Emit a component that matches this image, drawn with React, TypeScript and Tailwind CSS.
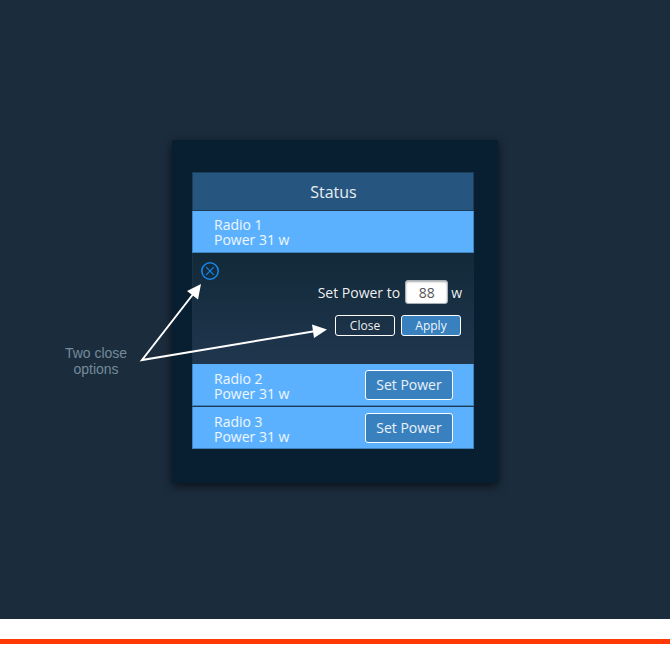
import React from "react";

const uiFont = "font-['Open_Sans','Noto_Sans',sans-serif]";

function RadioRow({ name, action = true }: { name: string; action?: boolean }) {
  return (
    <div className="flex h-[42px] items-center justify-between border-x border-b border-[#4183bd] bg-[#5cb1ff] pr-5 pl-[21px] text-sm leading-[15px] text-white/90">
      <div className={action ? "pt-[3px]" : "pt-px"}>
        <div>{name}</div>
        <div>Power 31 w</div>
      </div>
      {action && (
        <button className="h-[30px] w-[88px] rounded-[3px] border border-white bg-[#3980bf] text-sm leading-none whitespace-nowrap text-white/90">
          Set Power
        </button>
      )}
    </div>
  );
}

function PowerEditor() {
  return (
    <div className="flex h-[111px] border-l border-[#1a3247] bg-linear-to-b from-[#122939] to-[#20364e] text-sm text-white/95">
      <svg className="mt-[9px] ml-[7px] h-5 w-5 shrink-0" viewBox="0 0 20 20" fill="none" stroke="#1686e8">
        <circle cx="10" cy="9" r="8.2" strokeWidth="1.6" />
        <path d="M6.2 5.2 13.8 12.8M13.8 5.2 6.2 12.8" strokeWidth="1.2" />
      </svg>
      <div className="ml-auto flex flex-col items-end pt-[27px]">
        <div className="flex h-6 items-center pr-3">
          <span className="pt-0.5">Set Power to</span>
          <span className="ml-[5px] flex h-6 w-[43px] items-center justify-center rounded-[3px] border border-[#a9b1b8] bg-white pt-0.5 text-[#555] shadow-[inset_0_1px_2px_#aaa]">
            88
          </span>
          <span className="ml-[3px] pt-0.5">w</span>
        </div>
        <div className="mt-[11px] flex gap-1.5 pr-[13px] text-xs">
          <button className="h-[21px] w-[60px] rounded-[3px] border border-white leading-none">Close</button>
          <button className="h-[21px] w-[60px] rounded-[3px] border border-white bg-[#3980bf] leading-none">Apply</button>
        </div>
      </div>
    </div>
  );
}

export default function App() {
  return (
    <div className={`relative h-[652px] w-[670px] overflow-hidden bg-white ${uiFont}`}>
      <main className="h-[619px] bg-[#1b2c3d] pt-[140px] pl-[172px]">
        <section className="h-[343px] w-[326px] rounded-[2px] bg-[#081f31] pt-8 pl-5 shadow-[0_3px_10px_rgba(0,0,0,0.65)]">
          <div className="w-[282px]">
            <h1 className="flex h-[39px] items-center justify-center border border-[#1c3d59] bg-[#26557f] pl-px text-base text-white/90">
              Status
            </h1>
            <RadioRow name="Radio 1" action={false} />
            <PowerEditor />
            <RadioRow name="Radio 2" />
            <div className="h-px bg-[#1c3953]" />
            <RadioRow name="Radio 3" />
          </div>
        </section>
      </main>
      <div className="mt-5 h-[5px] bg-[#ff3905]" />
      <div className="absolute top-[345px] left-[56px] w-20 text-center font-['Liberation_Sans',sans-serif] text-sm leading-4 text-[#738b9b]">
        Two close
        <br />
        options
      </div>
      <svg className="pointer-events-none absolute top-0 left-0 h-[652px] w-[670px]" viewBox="0 0 670 652">
        <path d="M194 293 142 360 316 331" fill="none" stroke="white" strokeWidth="2" />
        <path d="M201 284 187 291 198 299.500ZM327 329.500 312 324.500 314 338Z" fill="white" />
      </svg>
    </div>
  );
}
